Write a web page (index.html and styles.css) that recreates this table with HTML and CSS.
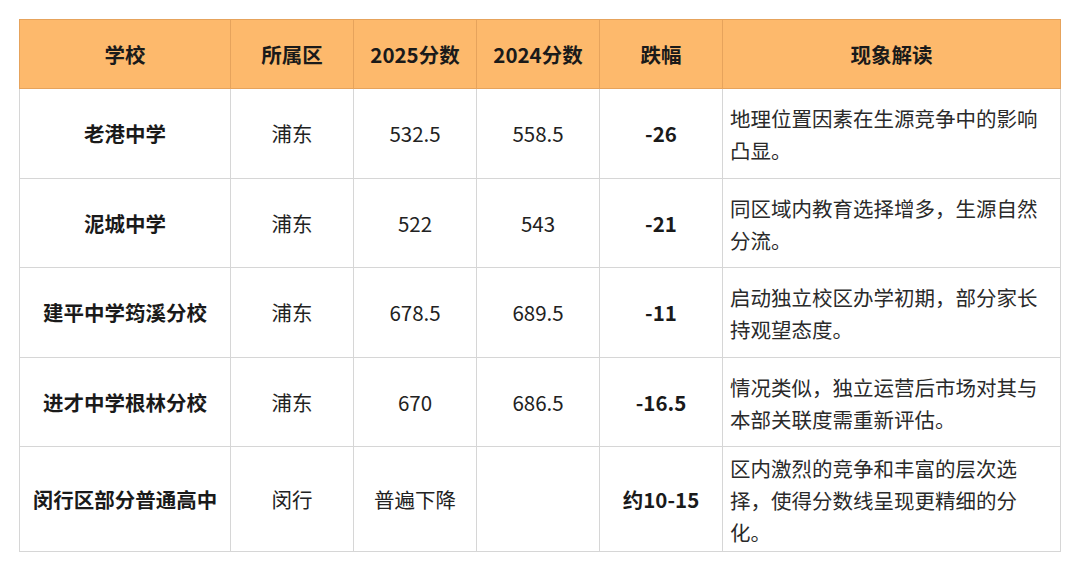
FILE: index.html
```html
<!DOCTYPE html>
<html lang="zh-CN">
<head>
<meta charset="utf-8">
<title>分数对比</title>
<link rel="stylesheet" href="styles.css">
</head>
<body>
<table class="score-table">
  <colgroup>
    <col class="c-school">
    <col class="c-mid">
    <col class="c-mid">
    <col class="c-mid">
    <col class="c-mid">
    <col class="c-desc">
  </colgroup>
  <thead>
    <tr class="head-row">
      <th>学校</th>
      <th>所属区</th>
      <th>2025分数</th>
      <th>2024分数</th>
      <th>跌幅</th>
      <th>现象解读</th>
    </tr>
  </thead>
  <tbody>
    <tr class="row">
      <td class="bold">老港中学</td>
      <td>浦东</td>
      <td>532.5</td>
      <td>558.5</td>
      <td class="bold">-26</td>
      <td class="desc">地理位置因素在生源竞争中的影响凸显。</td>
    </tr>
    <tr class="row">
      <td class="bold">泥城中学</td>
      <td>浦东</td>
      <td>522</td>
      <td>543</td>
      <td class="bold">-21</td>
      <td class="desc">同区域内教育选择增多，生源自然分流。</td>
    </tr>
    <tr class="row">
      <td class="bold">建平中学筠溪分校</td>
      <td>浦东</td>
      <td>678.5</td>
      <td>689.5</td>
      <td class="bold">-11</td>
      <td class="desc">启动独立校区办学初期，部分家长持观望态度。</td>
    </tr>
    <tr class="row">
      <td class="bold">进才中学根林分校</td>
      <td>浦东</td>
      <td>670</td>
      <td>686.5</td>
      <td class="bold">-16.5</td>
      <td class="desc">情况类似，独立运营后市场对其与本部关联度需重新评估。</td>
    </tr>
    <tr class="row last">
      <td class="bold">闵行区部分普通高中</td>
      <td>闵行</td>
      <td>普遍下降</td>
      <td></td>
      <td class="bold">约10-15</td>
      <td class="desc">区内激烈的竞争和丰富的层次选择，使得分数线呈现更精细的分化。</td>
    </tr>
  </tbody>
</table>
</body>
</html>
```

FILE: styles.css
```css
html, body {
  margin: 0;
  padding: 0;
  background: #ffffff;
}

body {
  padding: 19px 19px 0 19px;
  font-family: "Noto Sans CJK SC", "Noto Sans", sans-serif;
  font-size: 20.5px;
  color: #222222;
}

.score-table {
  width: 1041px;
  border-collapse: collapse;
  table-layout: fixed;
}

.c-school { width: 211px; }
.c-mid { width: 123px; }
.c-desc { width: 338px; }

.head-row { height: 69px; }
.row { height: 89.5px; }
.row.last { height: 105px; }

.score-table th {
  padding: 0;
  background: #fdb96c;
  border: 1px solid #e6a35c;
  font-weight: 700;
  color: #1a1a1a;
  text-align: center;
  vertical-align: middle;
}

.score-table td {
  padding: 0;
  border: 1px solid #d6d6d6;
  text-align: center;
  vertical-align: middle;
  line-height: 32px;
}

.score-table td.bold {
  font-weight: 700;
  color: #1a1a1a;
}

.score-table td.desc {
  text-align: left;
  padding: 2px 9px 0 7px;
  color: #2a2a2a;
}
```
